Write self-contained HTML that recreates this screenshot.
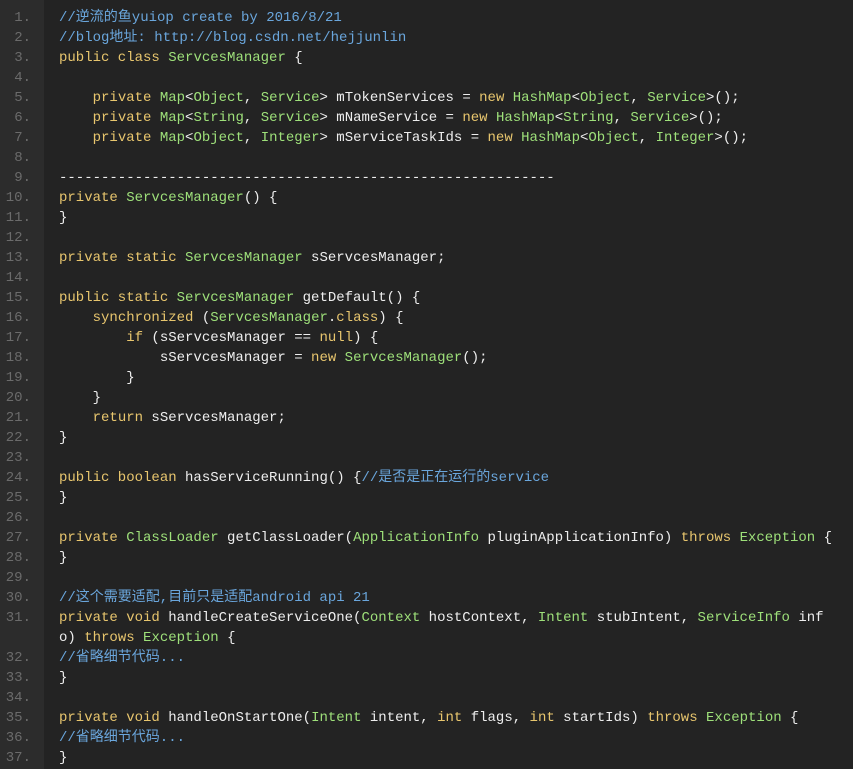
<!DOCTYPE html>
<html><head><meta charset="utf-8"><style>
html,body{margin:0;padding:0;background:#232323;width:853px;height:769px;overflow:hidden}
.g{position:absolute;left:0;top:0;width:44px;height:769px;background:#2c2c2c}
.wrap{position:absolute;left:0;top:8px;font-family:"Liberation Mono","Noto Sans CJK SC",monospace;font-size:14px;line-height:20px;color:#eeeeee}
.r{height:20px;white-space:pre;position:relative}
.n{position:absolute;left:0;width:31px;text-align:right;color:#6b6b6b}
.c{position:absolute;left:59px}
.k{color:#e8c66e}.t{color:#9ee07a}.m{color:#6aa6dc}
</style></head><body><div class="g"></div><div class="wrap">
<div class="r"><span class="n">1.</span><span class="c"><span class="m">//逆流的鱼yuiop create by 2016/8/21</span></span></div>
<div class="r"><span class="n">2.</span><span class="c"><span class="m">//blog地址: http://blog.csdn.net/hejjunlin</span></span></div>
<div class="r"><span class="n">3.</span><span class="c"><span class="k">public class</span> <span class="t">ServcesManager</span> {</span></div>
<div class="r"><span class="n">4.</span></div>
<div class="r"><span class="n">5.</span><span class="c">    <span class="k">private</span> <span class="t">Map</span>&lt;<span class="t">Object</span>, <span class="t">Service</span>&gt; mTokenServices = <span class="k">new</span> <span class="t">HashMap</span>&lt;<span class="t">Object</span>, <span class="t">Service</span>&gt;();</span></div>
<div class="r"><span class="n">6.</span><span class="c">    <span class="k">private</span> <span class="t">Map</span>&lt;<span class="t">String</span>, <span class="t">Service</span>&gt; mNameService = <span class="k">new</span> <span class="t">HashMap</span>&lt;<span class="t">String</span>, <span class="t">Service</span>&gt;();</span></div>
<div class="r"><span class="n">7.</span><span class="c">    <span class="k">private</span> <span class="t">Map</span>&lt;<span class="t">Object</span>, <span class="t">Integer</span>&gt; mServiceTaskIds = <span class="k">new</span> <span class="t">HashMap</span>&lt;<span class="t">Object</span>, <span class="t">Integer</span>&gt;();</span></div>
<div class="r"><span class="n">8.</span></div>
<div class="r"><span class="n">9.</span><span class="c">-----------------------------------------------------------</span></div>
<div class="r"><span class="n">10.</span><span class="c"><span class="k">private</span> <span class="t">ServcesManager</span>() {</span></div>
<div class="r"><span class="n">11.</span><span class="c">}</span></div>
<div class="r"><span class="n">12.</span></div>
<div class="r"><span class="n">13.</span><span class="c"><span class="k">private static</span> <span class="t">ServcesManager</span> sServcesManager;</span></div>
<div class="r"><span class="n">14.</span></div>
<div class="r"><span class="n">15.</span><span class="c"><span class="k">public static</span> <span class="t">ServcesManager</span> getDefault() {</span></div>
<div class="r"><span class="n">16.</span><span class="c">    <span class="k">synchronized</span> (<span class="t">ServcesManager</span>.<span class="k">class</span>) {</span></div>
<div class="r"><span class="n">17.</span><span class="c">        <span class="k">if</span> (sServcesManager == <span class="k">null</span>) {</span></div>
<div class="r"><span class="n">18.</span><span class="c">            sServcesManager = <span class="k">new</span> <span class="t">ServcesManager</span>();</span></div>
<div class="r"><span class="n">19.</span><span class="c">        }</span></div>
<div class="r"><span class="n">20.</span><span class="c">    }</span></div>
<div class="r"><span class="n">21.</span><span class="c">    <span class="k">return</span> sServcesManager;</span></div>
<div class="r"><span class="n">22.</span><span class="c">}</span></div>
<div class="r"><span class="n">23.</span></div>
<div class="r"><span class="n">24.</span><span class="c"><span class="k">public boolean</span> hasServiceRunning() {<span class="m">//是否是正在运行的service</span></span></div>
<div class="r"><span class="n">25.</span><span class="c">}</span></div>
<div class="r"><span class="n">26.</span></div>
<div class="r"><span class="n">27.</span><span class="c"><span class="k">private</span> <span class="t">ClassLoader</span> getClassLoader(<span class="t">ApplicationInfo</span> pluginApplicationInfo) <span class="k">throws</span> <span class="t">Exception</span> {</span></div>
<div class="r"><span class="n">28.</span><span class="c">}</span></div>
<div class="r"><span class="n">29.</span></div>
<div class="r"><span class="n">30.</span><span class="c"><span class="m">//这个需要适配,目前只是适配android api 21</span></span></div>
<div class="r"><span class="n">31.</span><span class="c"><span class="k">private void</span> handleCreateServiceOne(<span class="t">Context</span> hostContext, <span class="t">Intent</span> stubIntent, <span class="t">ServiceInfo</span> inf</span></div>
<div class="r"><span class="c">o) <span class="k">throws</span> <span class="t">Exception</span> {</span></div>
<div class="r"><span class="n">32.</span><span class="c"><span class="m">//省略细节代码...</span></span></div>
<div class="r"><span class="n">33.</span><span class="c">}</span></div>
<div class="r"><span class="n">34.</span></div>
<div class="r"><span class="n">35.</span><span class="c"><span class="k">private void</span> handleOnStartOne(<span class="t">Intent</span> intent, <span class="k">int</span> flags, <span class="k">int</span> startIds) <span class="k">throws</span> <span class="t">Exception</span> {</span></div>
<div class="r"><span class="n">36.</span><span class="c"><span class="m">//省略细节代码...</span></span></div>
<div class="r"><span class="n">37.</span><span class="c">}</span></div>
</div></body></html>
